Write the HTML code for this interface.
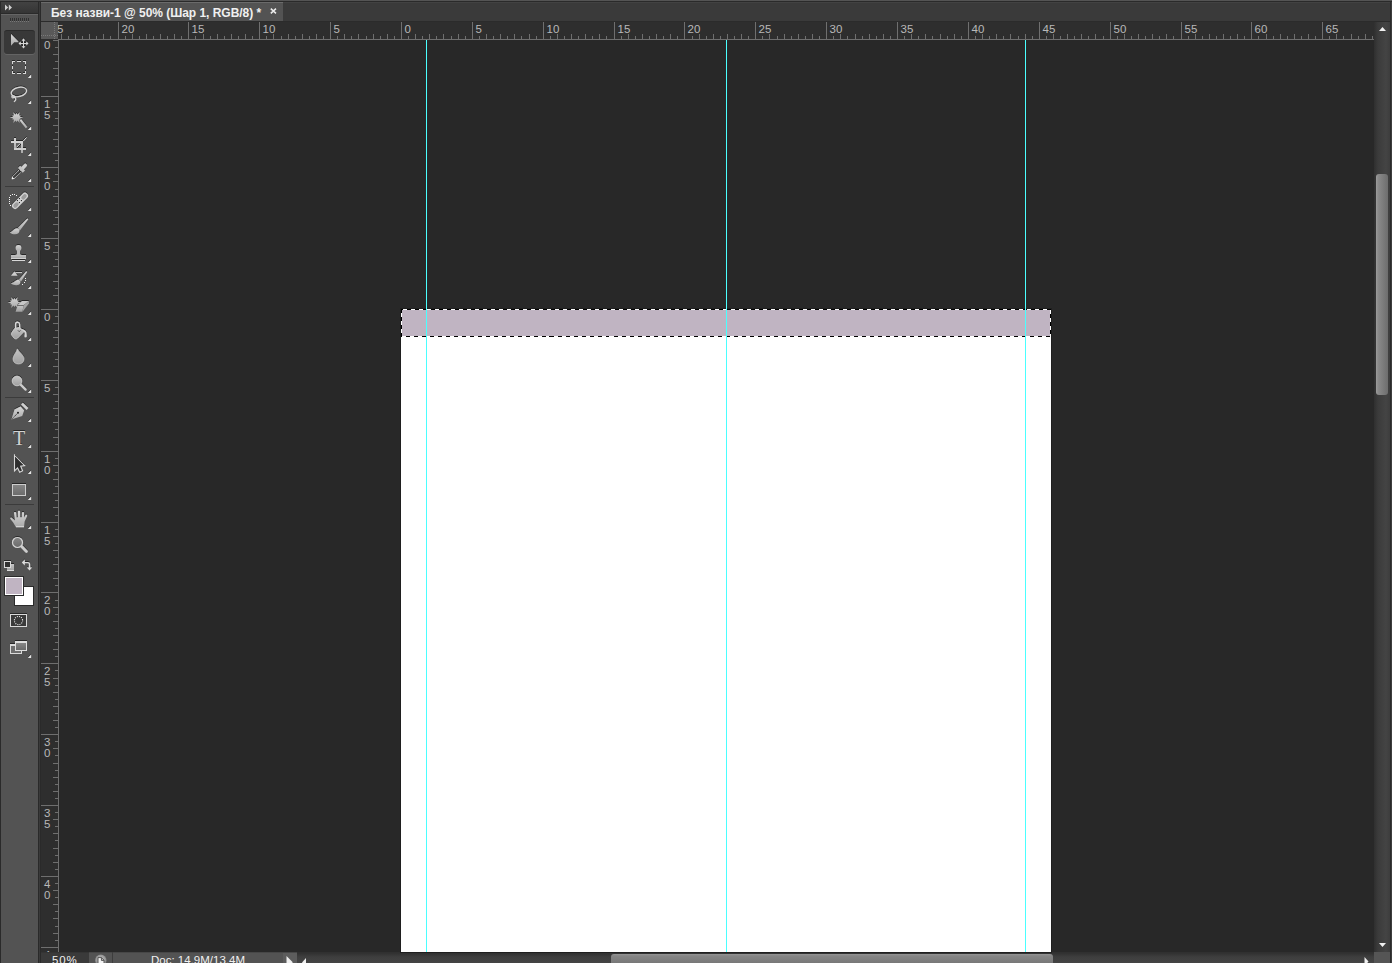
<!DOCTYPE html>
<html lang="uk"><head><meta charset="utf-8"><title>Photoshop</title>
<style>
html,body{margin:0;padding:0;}html{width:1392px;height:963px;overflow:hidden;background:#282828;}
body{width:1392px;height:963px;overflow:hidden;position:relative;background:#282828;font-family:"Liberation Sans",sans-serif;}
.abs{position:absolute;display:block;}
div{position:absolute;box-sizing:border-box;}
svg{position:absolute;display:block;overflow:visible;}
.hl{top:23px;height:12px;line-height:12px;font-size:11.5px;color:#b9b9b9;white-space:nowrap;}
.vl{left:44px;width:9px;height:11px;line-height:11px;font-size:11.5px;color:#b9b9b9;white-space:nowrap;}
.tri{width:0;height:0;border-style:solid;border-width:0 0 4px 4px;border-color:transparent transparent #d6d6d6 transparent;left:28px;}
.sep{left:5px;width:29px;height:1px;background:#3b3b3b;}
.guide{top:40px;width:1px;height:912px;background:#4affff;}

</style></head>
<body>
<svg class="abs" style="left:58px;top:22px" width="1316" height="18" viewBox="58 22 1316 18" shape-rendering="crispEdges">
<rect x="58" y="22" width="1316" height="18" fill="#2e2e2e"/>
<rect x="58" y="39" width="1316" height="1" fill="#6f6f6f"/>
<rect x="61" y="34" width="1" height="5" fill="#6f6f6f"/>
<rect x="68" y="36" width="1" height="3" fill="#6f6f6f"/>
<rect x="75" y="34" width="1" height="5" fill="#6f6f6f"/>
<rect x="82" y="36" width="1" height="3" fill="#6f6f6f"/>
<rect x="89" y="34" width="1" height="5" fill="#6f6f6f"/>
<rect x="96" y="36" width="1" height="3" fill="#6f6f6f"/>
<rect x="103" y="34" width="1" height="5" fill="#6f6f6f"/>
<rect x="110" y="36" width="1" height="3" fill="#6f6f6f"/>
<rect x="118" y="22" width="1" height="17" fill="#6f6f6f"/>
<rect x="125" y="36" width="1" height="3" fill="#6f6f6f"/>
<rect x="132" y="34" width="1" height="5" fill="#6f6f6f"/>
<rect x="139" y="36" width="1" height="3" fill="#6f6f6f"/>
<rect x="146" y="34" width="1" height="5" fill="#6f6f6f"/>
<rect x="153" y="36" width="1" height="3" fill="#6f6f6f"/>
<rect x="160" y="34" width="1" height="5" fill="#6f6f6f"/>
<rect x="167" y="36" width="1" height="3" fill="#6f6f6f"/>
<rect x="174" y="34" width="1" height="5" fill="#6f6f6f"/>
<rect x="181" y="36" width="1" height="3" fill="#6f6f6f"/>
<rect x="188" y="22" width="1" height="17" fill="#6f6f6f"/>
<rect x="195" y="36" width="1" height="3" fill="#6f6f6f"/>
<rect x="203" y="34" width="1" height="5" fill="#6f6f6f"/>
<rect x="210" y="36" width="1" height="3" fill="#6f6f6f"/>
<rect x="217" y="34" width="1" height="5" fill="#6f6f6f"/>
<rect x="224" y="36" width="1" height="3" fill="#6f6f6f"/>
<rect x="231" y="34" width="1" height="5" fill="#6f6f6f"/>
<rect x="238" y="36" width="1" height="3" fill="#6f6f6f"/>
<rect x="245" y="34" width="1" height="5" fill="#6f6f6f"/>
<rect x="252" y="36" width="1" height="3" fill="#6f6f6f"/>
<rect x="259" y="22" width="1" height="17" fill="#6f6f6f"/>
<rect x="266" y="36" width="1" height="3" fill="#6f6f6f"/>
<rect x="273" y="34" width="1" height="5" fill="#6f6f6f"/>
<rect x="281" y="36" width="1" height="3" fill="#6f6f6f"/>
<rect x="288" y="34" width="1" height="5" fill="#6f6f6f"/>
<rect x="295" y="36" width="1" height="3" fill="#6f6f6f"/>
<rect x="302" y="34" width="1" height="5" fill="#6f6f6f"/>
<rect x="309" y="36" width="1" height="3" fill="#6f6f6f"/>
<rect x="316" y="34" width="1" height="5" fill="#6f6f6f"/>
<rect x="323" y="36" width="1" height="3" fill="#6f6f6f"/>
<rect x="330" y="22" width="1" height="17" fill="#6f6f6f"/>
<rect x="337" y="36" width="1" height="3" fill="#6f6f6f"/>
<rect x="344" y="34" width="1" height="5" fill="#6f6f6f"/>
<rect x="351" y="36" width="1" height="3" fill="#6f6f6f"/>
<rect x="358" y="34" width="1" height="5" fill="#6f6f6f"/>
<rect x="366" y="36" width="1" height="3" fill="#6f6f6f"/>
<rect x="373" y="34" width="1" height="5" fill="#6f6f6f"/>
<rect x="380" y="36" width="1" height="3" fill="#6f6f6f"/>
<rect x="387" y="34" width="1" height="5" fill="#6f6f6f"/>
<rect x="394" y="36" width="1" height="3" fill="#6f6f6f"/>
<rect x="401" y="22" width="1" height="17" fill="#6f6f6f"/>
<rect x="408" y="36" width="1" height="3" fill="#6f6f6f"/>
<rect x="415" y="34" width="1" height="5" fill="#6f6f6f"/>
<rect x="422" y="36" width="1" height="3" fill="#6f6f6f"/>
<rect x="429" y="34" width="1" height="5" fill="#6f6f6f"/>
<rect x="436" y="36" width="1" height="3" fill="#6f6f6f"/>
<rect x="443" y="34" width="1" height="5" fill="#6f6f6f"/>
<rect x="451" y="36" width="1" height="3" fill="#6f6f6f"/>
<rect x="458" y="34" width="1" height="5" fill="#6f6f6f"/>
<rect x="465" y="36" width="1" height="3" fill="#6f6f6f"/>
<rect x="472" y="22" width="1" height="17" fill="#6f6f6f"/>
<rect x="479" y="36" width="1" height="3" fill="#6f6f6f"/>
<rect x="486" y="34" width="1" height="5" fill="#6f6f6f"/>
<rect x="493" y="36" width="1" height="3" fill="#6f6f6f"/>
<rect x="500" y="34" width="1" height="5" fill="#6f6f6f"/>
<rect x="507" y="36" width="1" height="3" fill="#6f6f6f"/>
<rect x="514" y="34" width="1" height="5" fill="#6f6f6f"/>
<rect x="521" y="36" width="1" height="3" fill="#6f6f6f"/>
<rect x="529" y="34" width="1" height="5" fill="#6f6f6f"/>
<rect x="536" y="36" width="1" height="3" fill="#6f6f6f"/>
<rect x="543" y="22" width="1" height="17" fill="#6f6f6f"/>
<rect x="550" y="36" width="1" height="3" fill="#6f6f6f"/>
<rect x="557" y="34" width="1" height="5" fill="#6f6f6f"/>
<rect x="564" y="36" width="1" height="3" fill="#6f6f6f"/>
<rect x="571" y="34" width="1" height="5" fill="#6f6f6f"/>
<rect x="578" y="36" width="1" height="3" fill="#6f6f6f"/>
<rect x="585" y="34" width="1" height="5" fill="#6f6f6f"/>
<rect x="592" y="36" width="1" height="3" fill="#6f6f6f"/>
<rect x="599" y="34" width="1" height="5" fill="#6f6f6f"/>
<rect x="606" y="36" width="1" height="3" fill="#6f6f6f"/>
<rect x="614" y="22" width="1" height="17" fill="#6f6f6f"/>
<rect x="621" y="36" width="1" height="3" fill="#6f6f6f"/>
<rect x="628" y="34" width="1" height="5" fill="#6f6f6f"/>
<rect x="635" y="36" width="1" height="3" fill="#6f6f6f"/>
<rect x="642" y="34" width="1" height="5" fill="#6f6f6f"/>
<rect x="649" y="36" width="1" height="3" fill="#6f6f6f"/>
<rect x="656" y="34" width="1" height="5" fill="#6f6f6f"/>
<rect x="663" y="36" width="1" height="3" fill="#6f6f6f"/>
<rect x="670" y="34" width="1" height="5" fill="#6f6f6f"/>
<rect x="677" y="36" width="1" height="3" fill="#6f6f6f"/>
<rect x="684" y="22" width="1" height="17" fill="#6f6f6f"/>
<rect x="692" y="36" width="1" height="3" fill="#6f6f6f"/>
<rect x="699" y="34" width="1" height="5" fill="#6f6f6f"/>
<rect x="706" y="36" width="1" height="3" fill="#6f6f6f"/>
<rect x="713" y="34" width="1" height="5" fill="#6f6f6f"/>
<rect x="720" y="36" width="1" height="3" fill="#6f6f6f"/>
<rect x="727" y="34" width="1" height="5" fill="#6f6f6f"/>
<rect x="734" y="36" width="1" height="3" fill="#6f6f6f"/>
<rect x="741" y="34" width="1" height="5" fill="#6f6f6f"/>
<rect x="748" y="36" width="1" height="3" fill="#6f6f6f"/>
<rect x="755" y="22" width="1" height="17" fill="#6f6f6f"/>
<rect x="762" y="36" width="1" height="3" fill="#6f6f6f"/>
<rect x="769" y="34" width="1" height="5" fill="#6f6f6f"/>
<rect x="777" y="36" width="1" height="3" fill="#6f6f6f"/>
<rect x="784" y="34" width="1" height="5" fill="#6f6f6f"/>
<rect x="791" y="36" width="1" height="3" fill="#6f6f6f"/>
<rect x="798" y="34" width="1" height="5" fill="#6f6f6f"/>
<rect x="805" y="36" width="1" height="3" fill="#6f6f6f"/>
<rect x="812" y="34" width="1" height="5" fill="#6f6f6f"/>
<rect x="819" y="36" width="1" height="3" fill="#6f6f6f"/>
<rect x="826" y="22" width="1" height="17" fill="#6f6f6f"/>
<rect x="833" y="36" width="1" height="3" fill="#6f6f6f"/>
<rect x="840" y="34" width="1" height="5" fill="#6f6f6f"/>
<rect x="847" y="36" width="1" height="3" fill="#6f6f6f"/>
<rect x="855" y="34" width="1" height="5" fill="#6f6f6f"/>
<rect x="862" y="36" width="1" height="3" fill="#6f6f6f"/>
<rect x="869" y="34" width="1" height="5" fill="#6f6f6f"/>
<rect x="876" y="36" width="1" height="3" fill="#6f6f6f"/>
<rect x="883" y="34" width="1" height="5" fill="#6f6f6f"/>
<rect x="890" y="36" width="1" height="3" fill="#6f6f6f"/>
<rect x="897" y="22" width="1" height="17" fill="#6f6f6f"/>
<rect x="904" y="36" width="1" height="3" fill="#6f6f6f"/>
<rect x="911" y="34" width="1" height="5" fill="#6f6f6f"/>
<rect x="918" y="36" width="1" height="3" fill="#6f6f6f"/>
<rect x="925" y="34" width="1" height="5" fill="#6f6f6f"/>
<rect x="932" y="36" width="1" height="3" fill="#6f6f6f"/>
<rect x="940" y="34" width="1" height="5" fill="#6f6f6f"/>
<rect x="947" y="36" width="1" height="3" fill="#6f6f6f"/>
<rect x="954" y="34" width="1" height="5" fill="#6f6f6f"/>
<rect x="961" y="36" width="1" height="3" fill="#6f6f6f"/>
<rect x="968" y="22" width="1" height="17" fill="#6f6f6f"/>
<rect x="975" y="36" width="1" height="3" fill="#6f6f6f"/>
<rect x="982" y="34" width="1" height="5" fill="#6f6f6f"/>
<rect x="989" y="36" width="1" height="3" fill="#6f6f6f"/>
<rect x="996" y="34" width="1" height="5" fill="#6f6f6f"/>
<rect x="1003" y="36" width="1" height="3" fill="#6f6f6f"/>
<rect x="1010" y="34" width="1" height="5" fill="#6f6f6f"/>
<rect x="1018" y="36" width="1" height="3" fill="#6f6f6f"/>
<rect x="1025" y="34" width="1" height="5" fill="#6f6f6f"/>
<rect x="1032" y="36" width="1" height="3" fill="#6f6f6f"/>
<rect x="1039" y="22" width="1" height="17" fill="#6f6f6f"/>
<rect x="1046" y="36" width="1" height="3" fill="#6f6f6f"/>
<rect x="1053" y="34" width="1" height="5" fill="#6f6f6f"/>
<rect x="1060" y="36" width="1" height="3" fill="#6f6f6f"/>
<rect x="1067" y="34" width="1" height="5" fill="#6f6f6f"/>
<rect x="1074" y="36" width="1" height="3" fill="#6f6f6f"/>
<rect x="1081" y="34" width="1" height="5" fill="#6f6f6f"/>
<rect x="1088" y="36" width="1" height="3" fill="#6f6f6f"/>
<rect x="1095" y="34" width="1" height="5" fill="#6f6f6f"/>
<rect x="1103" y="36" width="1" height="3" fill="#6f6f6f"/>
<rect x="1110" y="22" width="1" height="17" fill="#6f6f6f"/>
<rect x="1117" y="36" width="1" height="3" fill="#6f6f6f"/>
<rect x="1124" y="34" width="1" height="5" fill="#6f6f6f"/>
<rect x="1131" y="36" width="1" height="3" fill="#6f6f6f"/>
<rect x="1138" y="34" width="1" height="5" fill="#6f6f6f"/>
<rect x="1145" y="36" width="1" height="3" fill="#6f6f6f"/>
<rect x="1152" y="34" width="1" height="5" fill="#6f6f6f"/>
<rect x="1159" y="36" width="1" height="3" fill="#6f6f6f"/>
<rect x="1166" y="34" width="1" height="5" fill="#6f6f6f"/>
<rect x="1173" y="36" width="1" height="3" fill="#6f6f6f"/>
<rect x="1181" y="22" width="1" height="17" fill="#6f6f6f"/>
<rect x="1188" y="36" width="1" height="3" fill="#6f6f6f"/>
<rect x="1195" y="34" width="1" height="5" fill="#6f6f6f"/>
<rect x="1202" y="36" width="1" height="3" fill="#6f6f6f"/>
<rect x="1209" y="34" width="1" height="5" fill="#6f6f6f"/>
<rect x="1216" y="36" width="1" height="3" fill="#6f6f6f"/>
<rect x="1223" y="34" width="1" height="5" fill="#6f6f6f"/>
<rect x="1230" y="36" width="1" height="3" fill="#6f6f6f"/>
<rect x="1237" y="34" width="1" height="5" fill="#6f6f6f"/>
<rect x="1244" y="36" width="1" height="3" fill="#6f6f6f"/>
<rect x="1251" y="22" width="1" height="17" fill="#6f6f6f"/>
<rect x="1258" y="36" width="1" height="3" fill="#6f6f6f"/>
<rect x="1266" y="34" width="1" height="5" fill="#6f6f6f"/>
<rect x="1273" y="36" width="1" height="3" fill="#6f6f6f"/>
<rect x="1280" y="34" width="1" height="5" fill="#6f6f6f"/>
<rect x="1287" y="36" width="1" height="3" fill="#6f6f6f"/>
<rect x="1294" y="34" width="1" height="5" fill="#6f6f6f"/>
<rect x="1301" y="36" width="1" height="3" fill="#6f6f6f"/>
<rect x="1308" y="34" width="1" height="5" fill="#6f6f6f"/>
<rect x="1315" y="36" width="1" height="3" fill="#6f6f6f"/>
<rect x="1322" y="22" width="1" height="17" fill="#6f6f6f"/>
<rect x="1329" y="36" width="1" height="3" fill="#6f6f6f"/>
<rect x="1336" y="34" width="1" height="5" fill="#6f6f6f"/>
<rect x="1343" y="36" width="1" height="3" fill="#6f6f6f"/>
<rect x="1351" y="34" width="1" height="5" fill="#6f6f6f"/>
<rect x="1358" y="36" width="1" height="3" fill="#6f6f6f"/>
<rect x="1365" y="34" width="1" height="5" fill="#6f6f6f"/>
<rect x="1372" y="36" width="1" height="3" fill="#6f6f6f"/>
</svg>
<div class="hl" style="left:50.5px">25</div>
<div class="hl" style="left:121.5px">20</div>
<div class="hl" style="left:191.5px">15</div>
<div class="hl" style="left:262.5px">10</div>
<div class="hl" style="left:333.5px">5</div>
<div class="hl" style="left:404.5px">0</div>
<div class="hl" style="left:475.5px">5</div>
<div class="hl" style="left:546.5px">10</div>
<div class="hl" style="left:617.5px">15</div>
<div class="hl" style="left:687.5px">20</div>
<div class="hl" style="left:758.5px">25</div>
<div class="hl" style="left:829.5px">30</div>
<div class="hl" style="left:900.5px">35</div>
<div class="hl" style="left:971.5px">40</div>
<div class="hl" style="left:1042.5px">45</div>
<div class="hl" style="left:1113.5px">50</div>
<div class="hl" style="left:1184.5px">55</div>
<div class="hl" style="left:1254.5px">60</div>
<div class="hl" style="left:1325.5px">65</div>
<svg class="abs" style="left:41px;top:40px" width="18" height="912" viewBox="41 40 18 912" shape-rendering="crispEdges">
<rect x="41" y="40" width="18" height="912" fill="#2e2e2e"/>
<rect x="58" y="40" width="1" height="912" fill="#6f6f6f"/>
<rect x="53" y="40" width="5" height="1" fill="#6f6f6f"/>
<rect x="55" y="47" width="3" height="1" fill="#6f6f6f"/>
<rect x="53" y="54" width="5" height="1" fill="#6f6f6f"/>
<rect x="55" y="61" width="3" height="1" fill="#6f6f6f"/>
<rect x="53" y="68" width="5" height="1" fill="#6f6f6f"/>
<rect x="55" y="75" width="3" height="1" fill="#6f6f6f"/>
<rect x="53" y="82" width="5" height="1" fill="#6f6f6f"/>
<rect x="55" y="89" width="3" height="1" fill="#6f6f6f"/>
<rect x="41" y="96" width="17" height="1" fill="#6f6f6f"/>
<rect x="55" y="103" width="3" height="1" fill="#6f6f6f"/>
<rect x="53" y="111" width="5" height="1" fill="#6f6f6f"/>
<rect x="55" y="118" width="3" height="1" fill="#6f6f6f"/>
<rect x="53" y="125" width="5" height="1" fill="#6f6f6f"/>
<rect x="55" y="132" width="3" height="1" fill="#6f6f6f"/>
<rect x="53" y="139" width="5" height="1" fill="#6f6f6f"/>
<rect x="55" y="146" width="3" height="1" fill="#6f6f6f"/>
<rect x="53" y="153" width="5" height="1" fill="#6f6f6f"/>
<rect x="55" y="160" width="3" height="1" fill="#6f6f6f"/>
<rect x="41" y="167" width="17" height="1" fill="#6f6f6f"/>
<rect x="55" y="174" width="3" height="1" fill="#6f6f6f"/>
<rect x="53" y="181" width="5" height="1" fill="#6f6f6f"/>
<rect x="55" y="189" width="3" height="1" fill="#6f6f6f"/>
<rect x="53" y="196" width="5" height="1" fill="#6f6f6f"/>
<rect x="55" y="203" width="3" height="1" fill="#6f6f6f"/>
<rect x="53" y="210" width="5" height="1" fill="#6f6f6f"/>
<rect x="55" y="217" width="3" height="1" fill="#6f6f6f"/>
<rect x="53" y="224" width="5" height="1" fill="#6f6f6f"/>
<rect x="55" y="231" width="3" height="1" fill="#6f6f6f"/>
<rect x="41" y="238" width="17" height="1" fill="#6f6f6f"/>
<rect x="55" y="245" width="3" height="1" fill="#6f6f6f"/>
<rect x="53" y="252" width="5" height="1" fill="#6f6f6f"/>
<rect x="55" y="259" width="3" height="1" fill="#6f6f6f"/>
<rect x="53" y="266" width="5" height="1" fill="#6f6f6f"/>
<rect x="55" y="274" width="3" height="1" fill="#6f6f6f"/>
<rect x="53" y="281" width="5" height="1" fill="#6f6f6f"/>
<rect x="55" y="288" width="3" height="1" fill="#6f6f6f"/>
<rect x="53" y="295" width="5" height="1" fill="#6f6f6f"/>
<rect x="55" y="302" width="3" height="1" fill="#6f6f6f"/>
<rect x="41" y="309" width="17" height="1" fill="#6f6f6f"/>
<rect x="55" y="316" width="3" height="1" fill="#6f6f6f"/>
<rect x="53" y="323" width="5" height="1" fill="#6f6f6f"/>
<rect x="55" y="330" width="3" height="1" fill="#6f6f6f"/>
<rect x="53" y="337" width="5" height="1" fill="#6f6f6f"/>
<rect x="55" y="344" width="3" height="1" fill="#6f6f6f"/>
<rect x="53" y="352" width="5" height="1" fill="#6f6f6f"/>
<rect x="55" y="359" width="3" height="1" fill="#6f6f6f"/>
<rect x="53" y="366" width="5" height="1" fill="#6f6f6f"/>
<rect x="55" y="373" width="3" height="1" fill="#6f6f6f"/>
<rect x="41" y="380" width="17" height="1" fill="#6f6f6f"/>
<rect x="55" y="387" width="3" height="1" fill="#6f6f6f"/>
<rect x="53" y="394" width="5" height="1" fill="#6f6f6f"/>
<rect x="55" y="401" width="3" height="1" fill="#6f6f6f"/>
<rect x="53" y="408" width="5" height="1" fill="#6f6f6f"/>
<rect x="55" y="415" width="3" height="1" fill="#6f6f6f"/>
<rect x="53" y="422" width="5" height="1" fill="#6f6f6f"/>
<rect x="55" y="429" width="3" height="1" fill="#6f6f6f"/>
<rect x="53" y="437" width="5" height="1" fill="#6f6f6f"/>
<rect x="55" y="444" width="3" height="1" fill="#6f6f6f"/>
<rect x="41" y="451" width="17" height="1" fill="#6f6f6f"/>
<rect x="55" y="458" width="3" height="1" fill="#6f6f6f"/>
<rect x="53" y="465" width="5" height="1" fill="#6f6f6f"/>
<rect x="55" y="472" width="3" height="1" fill="#6f6f6f"/>
<rect x="53" y="479" width="5" height="1" fill="#6f6f6f"/>
<rect x="55" y="486" width="3" height="1" fill="#6f6f6f"/>
<rect x="53" y="493" width="5" height="1" fill="#6f6f6f"/>
<rect x="55" y="500" width="3" height="1" fill="#6f6f6f"/>
<rect x="53" y="507" width="5" height="1" fill="#6f6f6f"/>
<rect x="55" y="515" width="3" height="1" fill="#6f6f6f"/>
<rect x="41" y="522" width="17" height="1" fill="#6f6f6f"/>
<rect x="55" y="529" width="3" height="1" fill="#6f6f6f"/>
<rect x="53" y="536" width="5" height="1" fill="#6f6f6f"/>
<rect x="55" y="543" width="3" height="1" fill="#6f6f6f"/>
<rect x="53" y="550" width="5" height="1" fill="#6f6f6f"/>
<rect x="55" y="557" width="3" height="1" fill="#6f6f6f"/>
<rect x="53" y="564" width="5" height="1" fill="#6f6f6f"/>
<rect x="55" y="571" width="3" height="1" fill="#6f6f6f"/>
<rect x="53" y="578" width="5" height="1" fill="#6f6f6f"/>
<rect x="55" y="585" width="3" height="1" fill="#6f6f6f"/>
<rect x="41" y="592" width="17" height="1" fill="#6f6f6f"/>
<rect x="55" y="600" width="3" height="1" fill="#6f6f6f"/>
<rect x="53" y="607" width="5" height="1" fill="#6f6f6f"/>
<rect x="55" y="614" width="3" height="1" fill="#6f6f6f"/>
<rect x="53" y="621" width="5" height="1" fill="#6f6f6f"/>
<rect x="55" y="628" width="3" height="1" fill="#6f6f6f"/>
<rect x="53" y="635" width="5" height="1" fill="#6f6f6f"/>
<rect x="55" y="642" width="3" height="1" fill="#6f6f6f"/>
<rect x="53" y="649" width="5" height="1" fill="#6f6f6f"/>
<rect x="55" y="656" width="3" height="1" fill="#6f6f6f"/>
<rect x="41" y="663" width="17" height="1" fill="#6f6f6f"/>
<rect x="55" y="670" width="3" height="1" fill="#6f6f6f"/>
<rect x="53" y="678" width="5" height="1" fill="#6f6f6f"/>
<rect x="55" y="685" width="3" height="1" fill="#6f6f6f"/>
<rect x="53" y="692" width="5" height="1" fill="#6f6f6f"/>
<rect x="55" y="699" width="3" height="1" fill="#6f6f6f"/>
<rect x="53" y="706" width="5" height="1" fill="#6f6f6f"/>
<rect x="55" y="713" width="3" height="1" fill="#6f6f6f"/>
<rect x="53" y="720" width="5" height="1" fill="#6f6f6f"/>
<rect x="55" y="727" width="3" height="1" fill="#6f6f6f"/>
<rect x="41" y="734" width="17" height="1" fill="#6f6f6f"/>
<rect x="55" y="741" width="3" height="1" fill="#6f6f6f"/>
<rect x="53" y="748" width="5" height="1" fill="#6f6f6f"/>
<rect x="55" y="755" width="3" height="1" fill="#6f6f6f"/>
<rect x="53" y="763" width="5" height="1" fill="#6f6f6f"/>
<rect x="55" y="770" width="3" height="1" fill="#6f6f6f"/>
<rect x="53" y="777" width="5" height="1" fill="#6f6f6f"/>
<rect x="55" y="784" width="3" height="1" fill="#6f6f6f"/>
<rect x="53" y="791" width="5" height="1" fill="#6f6f6f"/>
<rect x="55" y="798" width="3" height="1" fill="#6f6f6f"/>
<rect x="41" y="805" width="17" height="1" fill="#6f6f6f"/>
<rect x="55" y="812" width="3" height="1" fill="#6f6f6f"/>
<rect x="53" y="819" width="5" height="1" fill="#6f6f6f"/>
<rect x="55" y="826" width="3" height="1" fill="#6f6f6f"/>
<rect x="53" y="833" width="5" height="1" fill="#6f6f6f"/>
<rect x="55" y="840" width="3" height="1" fill="#6f6f6f"/>
<rect x="53" y="848" width="5" height="1" fill="#6f6f6f"/>
<rect x="55" y="855" width="3" height="1" fill="#6f6f6f"/>
<rect x="53" y="862" width="5" height="1" fill="#6f6f6f"/>
<rect x="55" y="869" width="3" height="1" fill="#6f6f6f"/>
<rect x="41" y="876" width="17" height="1" fill="#6f6f6f"/>
<rect x="55" y="883" width="3" height="1" fill="#6f6f6f"/>
<rect x="53" y="890" width="5" height="1" fill="#6f6f6f"/>
<rect x="55" y="897" width="3" height="1" fill="#6f6f6f"/>
<rect x="53" y="904" width="5" height="1" fill="#6f6f6f"/>
<rect x="55" y="911" width="3" height="1" fill="#6f6f6f"/>
<rect x="53" y="918" width="5" height="1" fill="#6f6f6f"/>
<rect x="55" y="926" width="3" height="1" fill="#6f6f6f"/>
<rect x="53" y="933" width="5" height="1" fill="#6f6f6f"/>
<rect x="55" y="940" width="3" height="1" fill="#6f6f6f"/>
<rect x="41" y="947" width="17" height="1" fill="#6f6f6f"/>
</svg>
<div class="vl" style="top:29px">2</div>
<div class="vl" style="top:40px">0</div>
<div class="vl" style="top:99px">1</div>
<div class="vl" style="top:110px">5</div>
<div class="vl" style="top:170px">1</div>
<div class="vl" style="top:181px">0</div>
<div class="vl" style="top:241px">5</div>
<div class="vl" style="top:312px">0</div>
<div class="vl" style="top:383px">5</div>
<div class="vl" style="top:454px">1</div>
<div class="vl" style="top:465px">0</div>
<div class="vl" style="top:525px">1</div>
<div class="vl" style="top:536px">5</div>
<div class="vl" style="top:595px">2</div>
<div class="vl" style="top:606px">0</div>
<div class="vl" style="top:666px">2</div>
<div class="vl" style="top:677px">5</div>
<div class="vl" style="top:737px">3</div>
<div class="vl" style="top:748px">0</div>
<div class="vl" style="top:808px">3</div>
<div class="vl" style="top:819px">5</div>
<div class="vl" style="top:879px">4</div>
<div class="vl" style="top:890px">0</div>
<div class="vl" style="top:950px">4</div>
<div class="vl" style="top:961px">5</div>
<!-- top strip -->
<div style="left:0;top:0;width:1392px;height:1px;background:#545454"></div>
<div style="left:0;top:1px;width:1392px;height:1px;background:#2a2a2a"></div>
<!-- tab bar -->
<div style="left:41px;top:2px;width:1349px;height:19px;background:#3a3a3a;border-top:1px solid #424242"></div>
<div style="left:41px;top:21px;width:1349px;height:1px;background:#2b2b2b"></div>
<div style="left:41px;top:2px;width:242px;height:19px;background:#535353;border-top:1px solid #6b6b6b"></div>
<div id="tabtitle" style="left:51px;top:6px;height:14px;line-height:14px;font-size:12px;font-weight:bold;color:#f0f0f0;white-space:nowrap;letter-spacing:-0.03px">Без назви-1 @ 50% (Шар 1, RGB/8) *</div>
<svg style="left:270px;top:8px" width="7" height="6" viewBox="0 0 7 6"><path d="M0.8 0.6 L6 5.4 M6 0.6 L0.8 5.4" stroke="#ececec" stroke-width="1.5" fill="none"/></svg>
<!-- right edge -->
<div style="left:1390px;top:2px;width:1px;height:961px;background:#2b2b2b"></div><div style="left:1391px;top:2px;width:1px;height:961px;background:#3e3e3e"></div>
<!-- ruler corner -->
<div style="left:41px;top:22px;width:17px;height:17px;background:#595959"></div>
<div style="left:41px;top:39px;width:17px;height:1px;background:#2e2e2e"></div>
<svg style="left:41px;top:22px" width="17" height="17" viewBox="0 0 17 17" shape-rendering="crispEdges"><path d="M13.5 0V17" stroke="#7a7a7a" stroke-width="1" stroke-dasharray="1 1"/><path d="M0 13.5H17" stroke="#7a7a7a" stroke-width="1" stroke-dasharray="1 1"/></svg>
<!-- canvas -->
<div style="left:400px;top:308px;width:652px;height:644px;background:#1f1f1f"></div>
<div style="left:401px;top:309px;width:650px;height:643px;background:#ffffff"></div>
<div style="left:401px;top:309px;width:650px;height:28px;background:#c0b4c2"></div>
<svg style="left:401px;top:309px" width="650" height="28" viewBox="0 0 650 28" shape-rendering="crispEdges">
<rect x="0.5" y="0.5" width="649" height="27" fill="none" stroke="#ffffff" stroke-width="1"/>
<rect x="0.5" y="0.5" width="649" height="27" fill="none" stroke="#000000" stroke-width="1" stroke-dasharray="4 4" stroke-dashoffset="3"/>
</svg>
<!-- guides -->
<div class="guide" style="left:426px"></div>
<div class="guide" style="left:726px"></div>
<div class="guide" style="left:1025px"></div>
<!-- vertical scrollbar -->
<div style="left:1374px;top:22px;width:16px;height:930px;background:linear-gradient(to right,#2f2f2f,#3b3b3b 25%,#444444 75%,#3d3d3d)"></div>
<div style="left:1376px;top:174px;width:12px;height:221px;border-radius:3px;background:linear-gradient(to right,#9c9c9c 0,#8b8b8b 2px,#6d6d6d 100%)"></div>
<svg style="left:1379px;top:27px" width="7" height="4" viewBox="0 0 7 4"><path d="M0 4L3.5 0L7 4Z" fill="#f2f2f2"/></svg>
<svg style="left:1379px;top:943px" width="7" height="4" viewBox="0 0 7 4"><path d="M0 0L3.5 4L7 0Z" fill="#f2f2f2"/></svg>
<!-- status bar -->
<div style="left:41px;top:952px;width:1349px;height:11px;background:linear-gradient(to bottom,#303030 0,#303030 1px,#3e3e3e 5px,#444444)"></div>
<div style="left:400px;top:952px;width:652px;height:1px;background:#1f1f1f"></div>
<div style="left:41px;top:952px;width:48px;height:11px;background:#3a3a3a;border-top:1px solid #343434"></div>
<div style="left:89px;top:952px;width:23px;height:11px;background:#535353;border-top:1px solid #474747"></div>
<div style="left:112px;top:952px;width:1px;height:11px;background:#3d3d3d"></div>
<div style="left:113px;top:952px;width:170px;height:11px;background:#535353;border-top:1px solid #474747"></div>
<div style="left:283px;top:952px;width:14px;height:11px;background:#5c5c5c;border-top:1px solid #474747"></div>
<div style="left:52px;top:954px;height:12px;line-height:12px;font-size:11.5px;color:#f0f0f0;white-space:nowrap;letter-spacing:0.9px">50%</div>
<div style="left:151px;top:954px;height:12px;line-height:12px;font-size:11.5px;color:#f0f0f0;white-space:nowrap;letter-spacing:0px">Doc: 14.9M/13.4M</div>
<svg style="left:94px;top:953px" width="14" height="10" viewBox="94 953 14 10"><defs><radialGradient id="rg" cx="0.5" cy="0.45" r="0.55"><stop offset="0" stop-color="#c4c4c4"/><stop offset="0.7" stop-color="#9a9a9a"/><stop offset="1" stop-color="#6c6c6c"/></radialGradient></defs><circle cx="100.8" cy="960.3" r="5.8" fill="url(#rg)"/><path d="M98 957.6H101.6L104 960V964H98Z" fill="#f2f2f2" stroke="#484848" stroke-width="0.9"/><path d="M101.4 957.8V960.4H104" fill="#bdbdbd" stroke="#484848" stroke-width="0.9"/></svg>
<svg style="left:286px;top:956px" width="7" height="7" viewBox="0 0 7 7"><path d="M0.5 0L6.5 6V7H0.5Z" fill="#f0f0f0"/></svg>
<svg style="left:302px;top:958px" width="4" height="5" viewBox="0 0 4 5"><path d="M4 0L0 4.5L4 9Z" fill="#f0f0f0"/></svg>
<svg style="left:1364px;top:957px" width="5" height="6" viewBox="0 0 5 6"><path d="M0.5 0L4.5 4.5L0.5 9Z" fill="#f0f0f0"/></svg>
<div style="left:611px;top:954px;width:442px;height:12px;border-radius:3px;background:linear-gradient(to bottom,#949494,#858585 2px,#787878 9px)"></div>
<div style="left:1374px;top:952px;width:16px;height:11px;background:#555555"></div>
<!-- toolbar -->
<div style="left:0;top:2px;width:1px;height:961px;background:#2a2a2a"></div>
<div style="left:1px;top:2px;width:37px;height:11px;background:linear-gradient(to bottom,#424242,#353535)"></div>
<div style="left:1px;top:13px;width:37px;height:1px;background:#2a2a2a"></div>
<div style="left:1px;top:14px;width:37px;height:949px;background:#535353;border-top:1px solid #656565"></div>
<div style="left:38px;top:2px;width:3px;height:961px;background:#2a2a2a"></div>
<div style="left:39px;top:2px;width:1px;height:961px;background:#3a3a3a"></div>
<svg style="left:5px;top:4px" width="8" height="7" viewBox="0 0 8 7"><path d="M0 0.4L3.2 3.5L0 6.6Z M3.8 0.4L7 3.5L3.8 6.6Z" fill="#cfcfcf"/></svg>
<svg style="left:10px;top:18px" width="20" height="4" viewBox="0 0 20 4" shape-rendering="crispEdges"><path d="M0.5 0V3M2.5 0V3M4.5 0V3M6.5 0V3M8.5 0V3M10.5 0V3M12.5 0V3M14.5 0V3M16.5 0V3M18.5 0V3" stroke="#303030" stroke-width="1"/><path d="M0 3.5H20" stroke="#777" stroke-width="1" stroke-dasharray="1 1"/></svg>
<div style="left:4px;top:30px;width:31px;height:24px;border-radius:3px;background:#383838;border-top:1px solid #2b2b2b;box-shadow:0 1px 0 #646464"></div>
<div class="sep" style="top:186px"></div>
<div class="sep" style="top:397px"></div>
<div class="sep" style="top:504px"></div>
<!--ICONS_BEGIN-->
<svg id="tb" style="left:0;top:0" width="38" height="963" viewBox="0 0 38 963">
<defs>
<linearGradient id="gv" x1="0" y1="0" x2="0" y2="1"><stop offset="0" stop-color="#d6d6d6"/><stop offset="1" stop-color="#a9a9a9"/></linearGradient>
<linearGradient id="gv2" x1="0" y1="0" x2="0" y2="1"><stop offset="0" stop-color="#c4c4c4"/><stop offset="1" stop-color="#9f9f9f"/></linearGradient>
<linearGradient id="gd" x1="0" y1="0" x2="0" y2="1"><stop offset="0" stop-color="#868686"/><stop offset="1" stop-color="#6a6a6a"/></linearGradient>
<filter id="em" filterUnits="userSpaceOnUse" x="0" y="0" width="38" height="963"><feDropShadow dx="0" dy="-1" stdDeviation="0.25" flood-color="#1c1c1c" flood-opacity="0.85"/></filter>
<path id="tri" d="M3.5 0.3V3.6H0.2Z"/>
<path id="star" d="M0 -4.5 L1 -2.9 L3.2 -5.4 L2.5 -2 L4.3 -2.2 L3.2 -0.9 L6.8 0 L3.2 0.9 L4.3 2 L2.5 2 L3.2 5.3 L1 2.9 L0 4.4 L-1 2.9 L-3.2 5.3 L-2.5 2 L-4.3 2 L-3.2 0.9 L-6.8 0 L-3.2 -0.9 L-4.3 -2.2 L-2.5 -2 L-3.2 -5.4 L-1 -2.9 Z"/>
</defs>
<!-- sub-tool triangles -->
<g fill="#e6e6e6" filter="url(#em)">
<use href="#tri" x="27.6" y="74.4"/><use href="#tri" x="27.6" y="100.4"/><use href="#tri" x="27.6" y="126.4"/><use href="#tri" x="27.6" y="152.4"/><use href="#tri" x="27.6" y="178.4"/>
<use href="#tri" x="27.6" y="207.4"/><use href="#tri" x="27.6" y="233.4"/><use href="#tri" x="27.6" y="259.4"/><use href="#tri" x="27.6" y="285.4"/><use href="#tri" x="27.6" y="311.4"/><use href="#tri" x="27.6" y="337.4"/><use href="#tri" x="27.6" y="363.4"/><use href="#tri" x="27.6" y="389.4"/>
<use href="#tri" x="27.6" y="418.4"/><use href="#tri" x="27.6" y="444.4"/><use href="#tri" x="27.6" y="470.4"/><use href="#tri" x="27.6" y="496.4"/>
<use href="#tri" x="27.6" y="525.4"/><use href="#tri" x="27.6" y="654.4"/>
</g>
<!-- move tool -->
<g filter="url(#em)">
<path d="M11 34 L18.4 41.4 L18.4 42.3 L14.2 42.3 L11 45.8 Z" fill="url(#gv)"/>
<path d="M23.5 38.5 L25.4 40.7 H24 V43 H26.3 V41.6 L28.5 43.5 L26.3 45.4 V44 H24 V46.3 H25.4 L23.5 48.5 L21.6 46.3 H23 V44 H20.7 V45.4 L18.5 43.5 L20.7 41.6 V43 H23 V40.7 H21.6 Z" fill="#d6d6d6"/>
</g>
<!-- marquee -->
<g shape-rendering="crispEdges" filter="url(#em)" fill="#d8d8d8">
<path d="M12 61h3v1h-2v2h-1z M17 61h4v1h-4z M23 61h3v3h-1v-2h-2z M12 66h1v3h-1z M25 66h1v3h-1z M12 71h1v2h2v1h-3z M17 73h4v1h-4z M25 71h1v3h-3v-1h2z"/>
</g>
<!-- lasso -->
<g filter="url(#em)" fill="none" stroke="#d6d6d6" stroke-width="1.25" stroke-linecap="round">
<ellipse cx="18.9" cy="92" rx="7.9" ry="4.6" transform="rotate(-14 18.9 92)"/>
<path d="M14.6 96.4 C13.6 95.2 11.4 95.9 12 97.2 C12.6 98.3 14.6 97.6 14.6 96.4 C15.2 97.8 16.4 98.8 15.6 100.2 C15.2 100.9 14.8 101.2 14.3 101.5"/>
</g>
<!-- magic wand -->
<g filter="url(#em)">
<path d="M19.6 120.4 L21.2 119.2 L27.4 127 L25.8 128.3 Z" fill="url(#gv)"/>
<use href="#star" x="16.5" y="117.6" fill="url(#gv)"/>
</g>
<!-- crop -->
<g filter="url(#em)">
<rect x="16" y="143" width="5" height="5" fill="#646464"/>
<path d="M16.4 147.4 L20.4 143.4" stroke="#e0e0e0" stroke-width="1" />
<path d="M17 148 L21 144" stroke="#262626" stroke-width="1" />
<rect x="14" y="138" width="2" height="12" fill="url(#gv)"/>
<rect x="21" y="141" width="2" height="12" fill="url(#gv)"/>
<rect x="11" y="141" width="12" height="2" fill="#d4d4d4"/>
<rect x="14" y="148" width="12" height="2" fill="#cecece"/>
<path d="M23.3 141 L26.5 137.5" stroke="#e6e6e6" stroke-width="1" fill="none"/>
</g>
<!-- eyedropper -->
<g filter="url(#em)">
<path d="M21.6 169.2 L25.3 165.4" stroke="#cdcdcd" stroke-width="3.4" stroke-linecap="round"/>
<path d="M19.1 166.9 L23.9 171.7" stroke="#c2c2c2" stroke-width="3.1"/>
<path d="M18.8 170.4 L12.7 176.5 L12 179 L14.5 178.3 L20.8 172.4" fill="#3a3a3a" stroke="#ececec" stroke-width="1" stroke-dasharray="1 0.5"/>
<path d="M11.8 179.3 L12.3 177 L14.2 178.7 Z" fill="#f4f4f4"/>
</g>
<!-- healing brush -->
<g filter="url(#em)">
<path d="M15.1 205.9 L24.9 195.9" stroke="#d2d2d2" stroke-width="6.2" stroke-linecap="round"/>
<path d="M15.2 205.8 L16.8 204.2 M23.2 197.7 L24.8 196" stroke="#9c9c9c" stroke-width="3.8" stroke-linecap="round"/>
</g>
<g fill="#2c2c2c"><rect x="18.9" y="198" width="1.1" height="1.1"/><rect x="16.9" y="200" width="1.1" height="1.1"/><rect x="20.9" y="200" width="1.1" height="1.1"/><rect x="18.9" y="202" width="1.1" height="1.1"/></g>
<g fill="#f4f4f4" shape-rendering="crispEdges"><rect x="10" y="195" width="1" height="1"/><rect x="12" y="194" width="1" height="1"/><rect x="14" y="194" width="1" height="1"/><rect x="16" y="195" width="1" height="1"/><rect x="9" y="197" width="1" height="1"/><rect x="9" y="199" width="1" height="1"/><rect x="9" y="201" width="1" height="1"/><rect x="9" y="203" width="1" height="1"/><rect x="10" y="205" width="1" height="1"/></g>
<!-- brush -->
<g filter="url(#em)">
<path d="M27.3 218.6 L28.3 219.3 L19.9 230.4 L17.9 227.7 Z" fill="url(#gv)"/>
<path d="M17.5 228.2 C14.6 227.8 13 231.4 9.7 232.4 C12 234.4 16 234.8 18 233.6 C19.8 232.2 19.6 230.4 19.2 229.6 Z" fill="url(#gv)"/>
</g>
<!-- stamp -->
<g filter="url(#em)">
<ellipse cx="18.5" cy="248" rx="2.9" ry="3.1" fill="url(#gv)"/>
<path d="M17 250 H20 V253.5 Q20 255 22 255 H15 Q17 255 17 253.5 Z" fill="#b8b8b8"/>
<rect x="11" y="255" width="15" height="4" fill="url(#gv2)"/>
<rect x="11" y="258" width="15" height="1" fill="#d0d0d0"/>
<rect x="12" y="260" width="13" height="1" fill="#d8d8d8"/>
</g>
<!-- history brush -->
<g filter="url(#em)">
<path d="M26.2 271.3 L27.2 272 L21 281.6 L19 279.4 Z" fill="url(#gv)"/>
<path d="M18.8 279.8 C15.8 279.6 14.4 282.6 10.8 283.6 C13.2 285.4 17 285.6 18.8 284.8 C20.4 283.6 20.6 282 20.2 281.2 Z" fill="url(#gv)"/>
<path d="M11 275.8 L14.4 271.6 L15.6 273 L17.6 275.8 Z" fill="#cdcdcd"/>
<path d="M15.4 272.6 H22" stroke="#d0d0d0" stroke-width="1"/>
</g>
<g fill="#f0f0f0" shape-rendering="crispEdges"><rect x="25" y="278" width="1" height="1"/><rect x="25" y="280" width="1" height="1"/><rect x="24" y="282" width="1" height="1"/><rect x="22" y="284" width="1" height="1"/></g>
<!-- magic eraser -->
<g filter="url(#em)">
<path d="M17.5 305 L22.2 300.9 H28.9 L23.7 305 Z" fill="#c6c6c6"/>
<path d="M23.7 305.2 L28.9 301 V303.6 L22.5 311.7 Z" fill="#a2a2a2"/>
<path d="M17.4 305.7 H23.5 L22.3 311.7 H15.6 Z" fill="url(#gv2)"/>
<use href="#star" x="14.4" y="302.6" fill="url(#gv)"/>
</g>
<!-- paint bucket -->
<g filter="url(#em)">
<path d="M15.6 329 V324.2 C15.6 321.6 19.4 321.6 19.6 324.2 L19.8 329.6" fill="none" stroke="#d8d8d8" stroke-width="1.3"/>
<path d="M14.7 328.5 L19 327.5 L24.3 331.3 L17.6 338.1 C16.6 339.1 15.1 339.1 14.1 338.1 L12 335.6 C11.2 334.6 11.2 333.6 11.9 332.6 Z" fill="url(#gv2)" stroke="#d2d2d2" stroke-width="0.8"/>
<path d="M21.4 329 C24 329.4 26 330.6 26.4 332.6 L26.8 336.2 C26.8 337.8 24.4 337.8 24.4 336.2 L24.8 333.4 C24.6 332 23.6 331 22.6 330.4 Z" fill="#d4d4d4"/>
<path d="M18 330.4 L19.2 331.6 L20.4 330.4" stroke="#444" stroke-width="1" fill="none"/>
</g>
<!-- blur drop -->
<g filter="url(#em)">
<path d="M17.4 348.9 C18.6 352 24 355.4 24 359 C24 362 21.6 364 18.5 364 C15.4 364 13 362 13 359 C13 355.6 16.6 352.4 17.4 348.9 Z" fill="url(#gv2)" stroke="#cfcfcf" stroke-width="0.6"/>
</g>
<!-- dodge -->
<g filter="url(#em)">
<path d="M20.6 384.6 L25.6 389.6" stroke="#cccccc" stroke-width="2.2" stroke-linecap="round"/>
<circle cx="17" cy="381" r="4.8" fill="url(#gv2)" stroke="#d2d2d2" stroke-width="0.8"/>
</g>
<!-- pen -->
<g filter="url(#em)">
<path d="M11.4 419.6 L14.5 409.4 L20.6 406.6 L24.1 410.5 L22.2 416 Z" fill="url(#gv)"/>
<path d="M21 404.6 L22.8 402.8 L28.4 408 L26.6 410 Z" fill="#d0d0d0"/>
</g>
<path d="M12.4 418.6 L17.6 413.2" stroke="#2a2a2a" stroke-width="0.9" stroke-dasharray="1.2 0.6"/>
<circle cx="18" cy="412.7" r="1" fill="#1e1e1e"/>
<!-- rectangle -->
<g filter="url(#em)">
<rect x="12.5" y="484.5" width="13" height="11" fill="url(#gd)" stroke="#cdcdcd" stroke-width="1"/>
</g>
<!-- path select -->
<path d="M14.5 455.2 L14.5 471 L17.6 467.9 L19.7 472.2 L22.6 470.8 L20.7 466.2 L24.8 465.6 Z" fill="#2e2e2e" stroke="#d8d8d8" stroke-width="1.1" stroke-linejoin="miter"/>
<path d="M15.4 455.4 L25.4 465.2" stroke="#1e1e1e" stroke-width="1" stroke-dasharray="1 0.6"/>
<!-- hand -->
<g filter="url(#em)">
<path d="M16 527.2 H24 L24.6 521.4 L27.2 516 C27.4 514.8 26 514.2 25.4 515.2 L24 517.8 L24 512.8 C24 511.6 22 511.6 21.9 512.8 L21.8 517.2 L20.2 517.2 L20.1 511.6 C20.1 510.4 17.9 510.4 17.9 511.6 L17.9 517.2 L16.6 517.4 L16.2 512.8 C16 511.6 13.8 511.8 14 513 L15 520.4 L11.6 517.8 C10.6 517.2 9.8 518.2 10.4 519 L13 522.2 Z" fill="url(#gv)"/>
<rect x="16" y="526.2" width="8" height="1" fill="#dcdcdc"/>
</g>
<!-- zoom -->
<g filter="url(#em)">
<path d="M21.6 546.6 L26.4 551.4" stroke="#cccccc" stroke-width="2.8" stroke-linecap="round"/>
<circle cx="17.5" cy="542.5" r="5" fill="url(#gd)" stroke="#d4d4d4" stroke-width="1.2"/>
</g>
<!-- default colors -->
<g filter="url(#em)" shape-rendering="crispEdges">
<rect x="7" y="564" width="7" height="7" fill="url(#gv2)"/>
<rect x="7" y="570" width="7" height="1" fill="#dadada"/>
<rect x="4" y="561" width="7" height="7" fill="#d8d8d8"/>
</g>
<rect x="5" y="562" width="5" height="5" fill="#303030"/>
<!-- swap -->
<g filter="url(#em)">
<path d="M21.8 562.5 L24.8 559.4 V561.9 H27.6 C29.4 561.9 30.2 563 30.2 564.6 V567.4 H32.2 L29.5 570.4 L26.8 567.4 H28.9 V564.8 C28.9 563.6 28.4 563.2 27.4 563.2 H24.8 V565.4 Z" fill="#dadada"/>
</g>
<!-- swatches -->
<rect x="14" y="586" width="20" height="20" fill="#2a2a2a"/>
<rect x="15" y="587" width="18" height="18" fill="#ffffff"/>
<rect x="4" y="576" width="20" height="20" fill="#2a2a2a"/>
<rect x="5" y="577" width="18" height="18" fill="#ffffff"/>
<rect x="6" y="578" width="16" height="16" fill="#c0b4c2"/>
<!-- quick mask -->
<g filter="url(#em)" shape-rendering="crispEdges">
<rect x="10" y="614" width="17" height="13" fill="#dadada"/>
</g>
<rect x="11" y="615" width="15" height="11" fill="#3a3a3a"/>
<circle cx="18.5" cy="620.5" r="4.1" fill="none" stroke="#f4f4f4" stroke-width="1.1" stroke-dasharray="1 1.147"/>
<!-- screen mode -->
<g filter="url(#em)" shape-rendering="crispEdges">
<rect x="10" y="644" width="12" height="10" fill="#dadada"/>
</g>
<rect x="11" y="646" width="10" height="7" fill="#6e6e6e"/>
<g filter="url(#em)" shape-rendering="crispEdges">
<rect x="15" y="641" width="12" height="10" fill="#dedede"/>
</g>
<rect x="16" y="643" width="10" height="7" fill="url(#gd)"/>
</svg>
<div style="left:12px;top:427px;width:14px;height:22px;line-height:22px;font-family:'Liberation Serif',serif;font-size:20px;color:#d2d2d2;text-align:center;text-shadow:0 -1px 0 #262626">T</div>
<!--ICONS_END-->
</body></html>
